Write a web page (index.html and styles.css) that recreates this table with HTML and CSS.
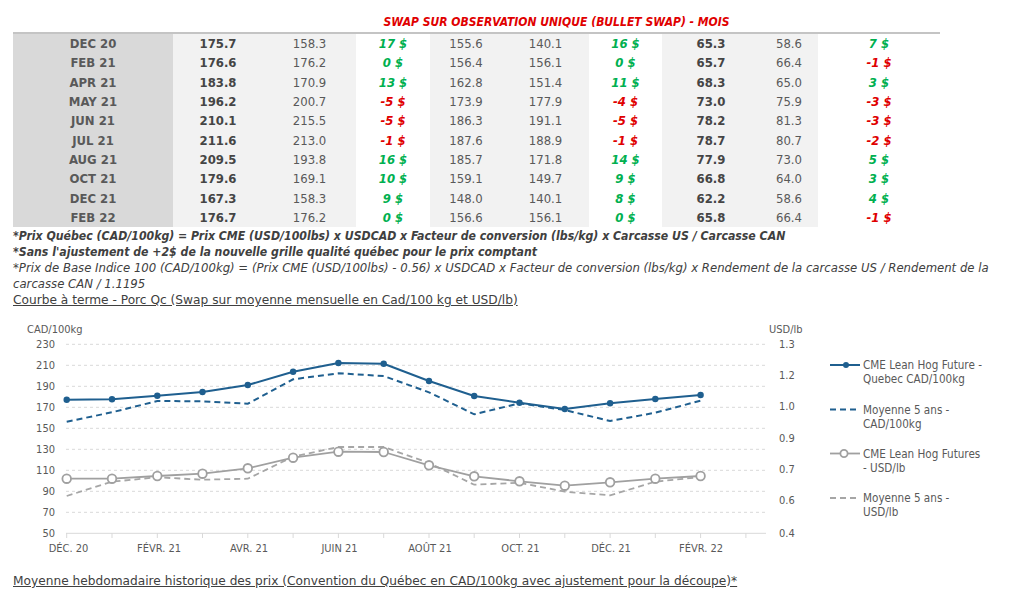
FILE: index.html
```html
<!DOCTYPE html>
<html lang="fr">
<head>
<meta charset="utf-8">
<title>Swap - Porc Qc</title>
<link rel="stylesheet" href="styles.css">
</head>
<body>
<div class="page">
  <div class="swap">
    <div class="swap-title"><span>SWAP SUR OBSERVATION UNIQUE (BULLET SWAP) - MOIS</span></div>
    <div class="swap-grid">
      <div class="c m">DEC 20</div><div class="c g b">175.7</div><div class="c g">158.3</div><div class="c d up">17 $</div><div class="c g">155.6</div><div class="c g">140.1</div><div class="c d up">16 $</div><div class="c g b">65.3</div><div class="c g">58.6</div><div class="c d up">7 $</div>
      <div class="c m">FEB 21</div><div class="c g b">176.6</div><div class="c g">176.2</div><div class="c d up">0 $</div><div class="c g">156.4</div><div class="c g">156.1</div><div class="c d up">0 $</div><div class="c g b">65.7</div><div class="c g">66.4</div><div class="c d dn">-1 $</div>
      <div class="c m">APR 21</div><div class="c g b">183.8</div><div class="c g">170.9</div><div class="c d up">13 $</div><div class="c g">162.8</div><div class="c g">151.4</div><div class="c d up">11 $</div><div class="c g b">68.3</div><div class="c g">65.0</div><div class="c d up">3 $</div>
      <div class="c m">MAY 21</div><div class="c g b">196.2</div><div class="c g">200.7</div><div class="c d dn">-5 $</div><div class="c g">173.9</div><div class="c g">177.9</div><div class="c d dn">-4 $</div><div class="c g b">73.0</div><div class="c g">75.9</div><div class="c d dn">-3 $</div>
      <div class="c m">JUN 21</div><div class="c g b">210.1</div><div class="c g">215.5</div><div class="c d dn">-5 $</div><div class="c g">186.3</div><div class="c g">191.1</div><div class="c d dn">-5 $</div><div class="c g b">78.2</div><div class="c g">81.3</div><div class="c d dn">-3 $</div>
      <div class="c m">JUL 21</div><div class="c g b">211.6</div><div class="c g">213.0</div><div class="c d dn">-1 $</div><div class="c g">187.6</div><div class="c g">188.9</div><div class="c d dn">-1 $</div><div class="c g b">78.7</div><div class="c g">80.7</div><div class="c d dn">-2 $</div>
      <div class="c m">AUG 21</div><div class="c g b">209.5</div><div class="c g">193.8</div><div class="c d up">16 $</div><div class="c g">185.7</div><div class="c g">171.8</div><div class="c d up">14 $</div><div class="c g b">77.9</div><div class="c g">73.0</div><div class="c d up">5 $</div>
      <div class="c m">OCT 21</div><div class="c g b">179.6</div><div class="c g">169.1</div><div class="c d up">10 $</div><div class="c g">159.1</div><div class="c g">149.7</div><div class="c d up">9 $</div><div class="c g b">66.8</div><div class="c g">64.0</div><div class="c d up">3 $</div>
      <div class="c m">DEC 21</div><div class="c g b">167.3</div><div class="c g">158.3</div><div class="c d up">9 $</div><div class="c g">148.0</div><div class="c g">140.1</div><div class="c d up">8 $</div><div class="c g b">62.2</div><div class="c g">58.6</div><div class="c d up">4 $</div>
      <div class="c m">FEB 22</div><div class="c g b">176.7</div><div class="c g">176.2</div><div class="c d up">0 $</div><div class="c g">156.6</div><div class="c g">156.1</div><div class="c d up">0 $</div><div class="c g b">65.8</div><div class="c g">66.4</div><div class="c d dn">-1 $</div>
    </div>
  </div>

  <div class="notes">
    <p class="note strong">*Prix Québec (CAD/100kg) = Prix CME (USD/100lbs) x USDCAD x Facteur de conversion (lbs/kg) x Carcasse US / Carcasse CAN</p>
    <p class="note strong">*Sans l'ajustement de +2$ de la nouvelle grille qualité québec pour le prix comptant</p>
    <p class="note">*Prix de Base Indice 100 (CAD/100kg) = (Prix CME (USD/100lbs) - 0.56) x USDCAD x Facteur de conversion (lbs/kg) x Rendement de la carcasse US / Rendement de la carcasse CAN / 1.1195</p>
    <p class="section-title">Courbe à terme - Porc Qc (Swap sur moyenne mensuelle en Cad/100 kg et USD/lb)</p>
  </div>

  <svg class="chart" width="1024" height="256" viewBox="0 308 1024 256" xmlns="http://www.w3.org/2000/svg">
    <g class="grid">
      <line x1="66" y1="344.3" x2="766" y2="344.3"/>
      <line x1="66" y1="365.3" x2="766" y2="365.3"/>
      <line x1="66" y1="386.3" x2="766" y2="386.3"/>
      <line x1="66" y1="407.3" x2="766" y2="407.3"/>
      <line x1="66" y1="428.3" x2="766" y2="428.3"/>
      <line x1="66" y1="449.3" x2="766" y2="449.3"/>
      <line x1="66" y1="470.3" x2="766" y2="470.3"/>
      <line x1="66" y1="491.3" x2="766" y2="491.3"/>
      <line x1="66" y1="512.3" x2="766" y2="512.3"/>
    </g>
    <g class="axis">
      <line x1="66" y1="533.3" x2="766" y2="533.3"/>
      <path d="M66.7 533v5M112 533v5M157.3 533v5M202.5 533v5M247.8 533v5M293.1 533v5M338.4 533v5M383.7 533v5M429 533v5M474.2 533v5M519.5 533v5M564.8 533v5M610.1 533v5M655.3 533v5M700.6 533v5M745.9 533v5"/>
    </g>
    <g class="lbl">
      <text x="27" y="333">CAD/100kg</text>
      <text x="769" y="333">USD/lb</text>
    </g>
    <g class="lbl end">
      <text x="55" y="348">230</text>
      <text x="55" y="369">210</text>
      <text x="55" y="390">190</text>
      <text x="55" y="411">170</text>
      <text x="55" y="432">150</text>
      <text x="55" y="453">130</text>
      <text x="55" y="474">110</text>
      <text x="55" y="495">90</text>
      <text x="55" y="516">70</text>
      <text x="55" y="537">50</text>
    </g>
    <g class="lbl">
      <text x="779" y="348">1.3</text>
      <text x="779" y="379">1.2</text>
      <text x="779" y="410">1.0</text>
      <text x="779" y="442">0.9</text>
      <text x="779" y="473">0.7</text>
      <text x="779" y="504">0.6</text>
      <text x="779" y="537">0.4</text>
    </g>
    <g class="lbl mid">
      <text x="68.5" y="552">DÉC. 20</text>
      <text x="159" y="552">FÉVR. 21</text>
      <text x="249" y="552">AVR. 21</text>
      <text x="339.5" y="552">JUIN 21</text>
      <text x="430" y="552">AOÛT 21</text>
      <text x="520.5" y="552">OCT. 21</text>
      <text x="611" y="552">DÉC. 21</text>
      <text x="701" y="552">FÉVR. 22</text>
    </g>

    <polyline class="s-blue-dash" points="66.7,421.7 112,412.3 157.3,401 202.5,401.3 247.8,403.7 293.1,379.3 338.4,373.3 383.7,376 429,392.3 474.2,414.3 519.5,403.3 564.8,410 610.1,421 655.3,412.7 700.6,400.7"/>
    <polyline class="s-gray-dash" points="66.7,496 112,481.7 157.3,477.3 202.5,479.7 247.8,478.7 293.1,456.7 338.4,447 383.7,447 429,463 474.2,484.7 519.5,482.7 564.8,491.7 610.1,495.3 655.3,481.7 700.6,477"/>
    <polyline class="s-blue" points="66.7,399.7 112,399.3 157.3,395.7 202.5,392 247.8,385 293.1,371.7 338.4,363 383.7,363.7 429,381 474.2,396 519.5,402.7 564.8,409 610.1,403.3 655.3,399 700.6,395"/>
    <g class="dot-blue">
      <circle cx="66.7" cy="399.7" r="3.2"/><circle cx="112" cy="399.3" r="3.2"/><circle cx="157.3" cy="395.7" r="3.2"/><circle cx="202.5" cy="392" r="3.2"/><circle cx="247.8" cy="385" r="3.2"/><circle cx="293.1" cy="371.7" r="3.2"/><circle cx="338.4" cy="363" r="3.2"/><circle cx="383.7" cy="363.7" r="3.2"/><circle cx="429" cy="381" r="3.2"/><circle cx="474.2" cy="396" r="3.2"/><circle cx="519.5" cy="402.7" r="3.2"/><circle cx="564.8" cy="409" r="3.2"/><circle cx="610.1" cy="403.3" r="3.2"/><circle cx="655.3" cy="399" r="3.2"/><circle cx="700.6" cy="395" r="3.2"/>
    </g>
    <polyline class="s-gray" points="66.7,478.7 112,478.7 157.3,476 202.5,473.7 247.8,468.3 293.1,457.7 338.4,451.7 383.7,452 429,465.3 474.2,476.3 519.5,481.3 564.8,485.7 610.1,482.3 655.3,478.7 700.6,476"/>
    <g class="dot-gray">
      <circle cx="66.7" cy="478.7" r="4.3"/><circle cx="112" cy="478.7" r="4.3"/><circle cx="157.3" cy="476" r="4.3"/><circle cx="202.5" cy="473.7" r="4.3"/><circle cx="247.8" cy="468.3" r="4.3"/><circle cx="293.1" cy="457.7" r="4.3"/><circle cx="338.4" cy="451.7" r="4.3"/><circle cx="383.7" cy="452" r="4.3"/><circle cx="429" cy="465.3" r="4.3"/><circle cx="474.2" cy="476.3" r="4.3"/><circle cx="519.5" cy="481.3" r="4.3"/><circle cx="564.8" cy="485.7" r="4.3"/><circle cx="610.1" cy="482.3" r="4.3"/><circle cx="655.3" cy="478.7" r="4.3"/><circle cx="700.6" cy="476" r="4.3"/>
    </g>

    <g class="legend">
      <line class="s-blue" x1="830" y1="365" x2="860" y2="365"/>
      <circle class="dot-blue-one" cx="846" cy="365" r="3"/>
      <text x="863" y="369">CME Lean Hog Future -</text>
      <text x="863" y="383">Quebec CAD/100kg</text>

      <line class="s-blue-dash" x1="830" y1="409.5" x2="860" y2="409.5"/>
      <text x="863" y="414">Moyenne 5 ans -</text>
      <text x="863" y="428">CAD/100kg</text>

      <line class="s-gray" x1="830" y1="453.5" x2="860" y2="453.5"/>
      <circle class="dot-gray-one" cx="844" cy="453.5" r="3.6"/>
      <text x="863" y="457.5">CME Lean Hog Futures</text>
      <text x="863" y="472">- USD/lb</text>

      <line class="s-gray-dash" x1="830" y1="498" x2="860" y2="498"/>
      <text x="863" y="502">Moyenne 5 ans -</text>
      <text x="863" y="516">USD/lb</text>
    </g>
  </svg>

  <p class="footer-title">Moyenne hebdomadaire historique des prix (Convention du Québec en CAD/100kg avec ajustement pour la découpe)*</p>
</div>
</body>
</html>
```
FILE: styles.css
```css
* { box-sizing: border-box; }
html, body { margin: 0; padding: 0; background: #ffffff; }
body {
  font-family: "DejaVu Sans Condensed", "DejaVu Sans", sans-serif;
  color: #404040;
  width: 1024px;
  height: 595px;
  overflow: hidden;
}
.page { width: 1024px; }

.swap { margin-left: 13px; width: 927px; }
.swap-title {
  height: 34px;
  padding: 14px 0 0 160px;
  border-bottom: 2px solid #c4c4c4;
  text-align: center;
  font-size: 12px;
  line-height: 16px;
  font-weight: bold;
  font-style: italic;
  color: #e00000;
}
.swap-grid {
  display: grid;
  grid-template-columns: 160px 90px 93px 74px 72px 87px 73px 98px 58px 122px;
  grid-auto-rows: 19.3px;
  font-size: 13px;
}
.c {
  display: flex;
  align-items: center;
  justify-content: center;
  color: #595959;
  white-space: nowrap;
}
.m { background: #d9d9d9; font-weight: bold; }
.g { background: #f2f2f2; }
.b { font-weight: bold; color: #454545; }
.d { background: #ffffff; font-weight: bold; font-style: italic; }
.up { color: #00b050; }
.dn { color: #e00000; }

.notes { margin: 1px 0 0 13px; width: 1000px; font-size: 12px; line-height: 16px; }
.note {
  margin: 0;
  font-family: "DejaVu Sans", sans-serif;
  font-size: 11.7px;
  font-style: italic;
  color: #404040;
}
.note.strong {
  font-family: "DejaVu Sans Condensed", "DejaVu Sans", sans-serif;
  font-size: 12.2px;
  font-weight: bold;
}
.section-title {
  margin: 0;
  font-family: "DejaVu Sans", sans-serif;
  font-size: 12.2px;
  text-decoration: underline;
  color: #404040;
}

.chart { display: block; font-family: "DejaVu Sans Condensed", "DejaVu Sans", sans-serif; }
.grid line { stroke: #d9d9d9; stroke-width: 1; stroke-dasharray: 3 3; }
.axis line, .axis path { stroke: #d9d9d9; stroke-width: 1; fill: none; }
.lbl text { fill: #595959; font-size: 11px; }
.lbl.end text { text-anchor: end; }
.lbl.mid text { text-anchor: middle; }
.legend text { fill: #595959; font-size: 11.6px; }

.s-blue { fill: none; stroke: #1f5f8f; stroke-width: 2; stroke-linejoin: round; }
.s-blue-dash { fill: none; stroke: #1f5f8f; stroke-width: 2; stroke-dasharray: 6 4; }
.s-gray { fill: none; stroke: #a0a0a0; stroke-width: 1.8; stroke-linejoin: round; }
.s-gray-dash { fill: none; stroke: #a6a6a6; stroke-width: 1.8; stroke-dasharray: 6 4; }
.dot-blue circle, .dot-blue-one { fill: #1f5f8f; }
.dot-gray circle, .dot-gray-one { fill: #ffffff; stroke: #a0a0a0; stroke-width: 1.8; }

.footer-title {
  margin: 9px 0 0 13px;
  font-family: "DejaVu Sans", sans-serif;
  font-size: 12.2px;
  line-height: 16px;
  text-decoration: underline;
  color: #404040;
}
```
